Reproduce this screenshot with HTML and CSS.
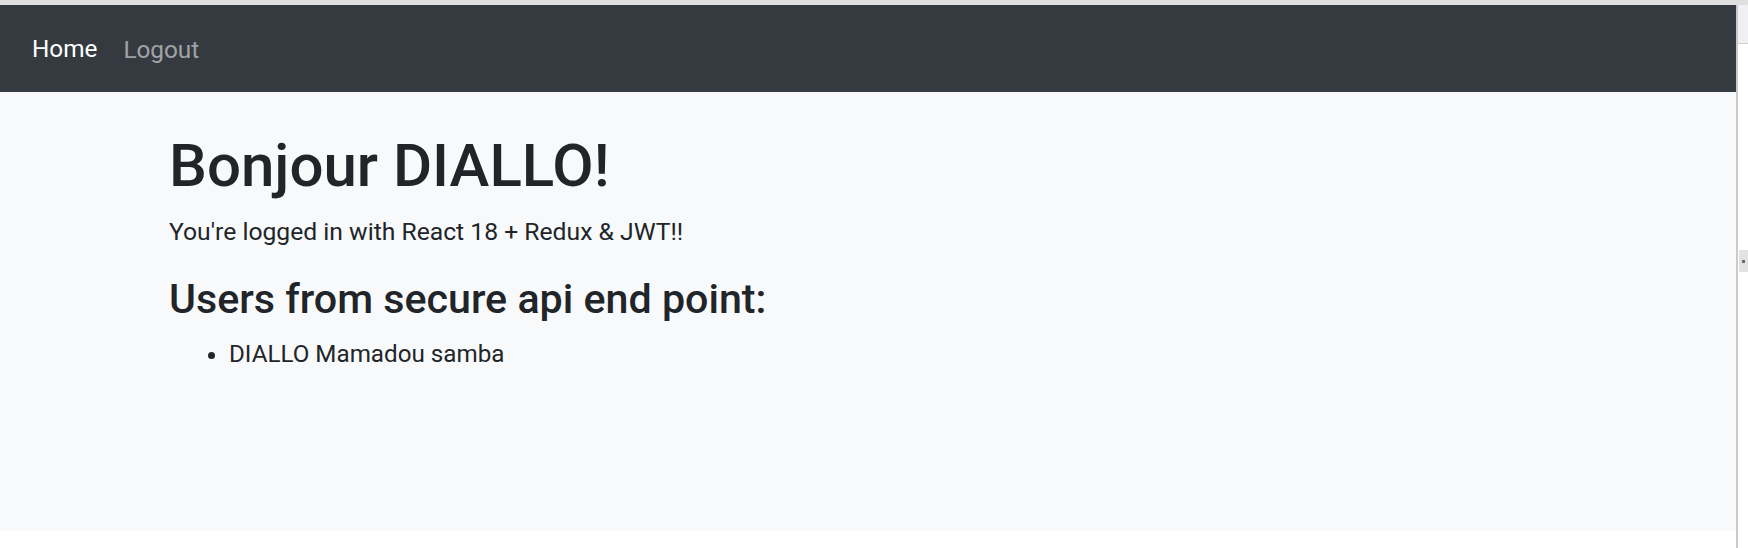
FILE: index.html
```html
<!DOCTYPE html>
<html lang="fr">
<head>
<meta charset="utf-8">
<title>Home</title>
<link rel="stylesheet" href="styles.css">
</head>
<body>
<div class="topstrip"></div>
<div class="frame">
  <div class="app">
    <nav class="navbar">
      <a class="nav-link active" href="#">Home</a>
      <a class="nav-link" href="#">Logout</a>
    </nav>
    <main class="content">
      <div class="container">
        <h1 class="title">Bonjour DIALLO!</h1>
        <p class="lead-text">You're logged in with React 18 + Redux &amp; JWT!!</p>
        <h3 class="subtitle">Users from secure api end point:</h3>
        <ul class="users">
          <li>DIALLO Mamadou samba</li>
        </ul>
      </div>
    </main>
  </div>
  <div class="divider"></div>
  <aside class="side">
    <div class="side-top"></div>
    <div class="side-handle"><span class="dot"></span></div>
  </aside>
</div>
</body>
</html>
```

FILE: styles.css
```css
* { box-sizing: border-box; }
html, body { margin: 0; padding: 0; }
body {
  width: 1748px;
  height: 548px;
  overflow: hidden;
  background: #ffffff;
  font-family: Roboto, "Noto Sans", sans-serif;
  color: #212529;
}
.topstrip {
  height: 5px;
  background: #dfdfdf;
}
.frame {
  display: flex;
  height: 543px;
}
.app {
  width: 1736px;
  display: flex;
  flex-direction: column;
}
.navbar {
  height: 87px;
  background: #343a40;
  display: flex;
  align-items: center;
  padding-left: 32px;
  padding-top: 2px;
  gap: 26px;
}
.nav-link {
  font-size: 24.3px;
  line-height: 36px;
  color: rgba(255, 255, 255, 0.55);
  text-decoration: none;
}
.nav-link.active {
  color: #ffffff;
  margin-top: -2px;
}
.content {
  height: 439px;
  background: #f8f9fa;
  padding-top: 38px;
}
.container {
  padding-left: 169px;
}
.title {
  margin: 0 0 12px;
  font-size: 60px;
  line-height: 72px;
  font-weight: 500;
}
.lead-text {
  margin: 0 0 24px;
  font-size: 24.7px;
  line-height: 36px;
}
.subtitle {
  margin: 0 0 12px;
  font-size: 41.2px;
  line-height: 50px;
  font-weight: 500;
}
.users {
  margin: 0;
  padding-left: 60px;
  font-size: 24.2px;
  line-height: 36px;
}
.divider {
  width: 2px;
  background: #c9cacc;
}
.side {
  flex: 1;
  display: flex;
  flex-direction: column;
  background: #ffffff;
}
.side-top {
  height: 39px;
  background: #f0f0f2;
  border-bottom: 1px solid #cfcfd1;
}
.side-handle {
  margin-top: 206px;
  margin-left: 1px;
  height: 22px;
  background: #e2e2e2;
  display: flex;
  align-items: center;
  justify-content: center;
}
.dot {
  width: 3px;
  height: 3px;
  background: #6a6a6a;
}
```
